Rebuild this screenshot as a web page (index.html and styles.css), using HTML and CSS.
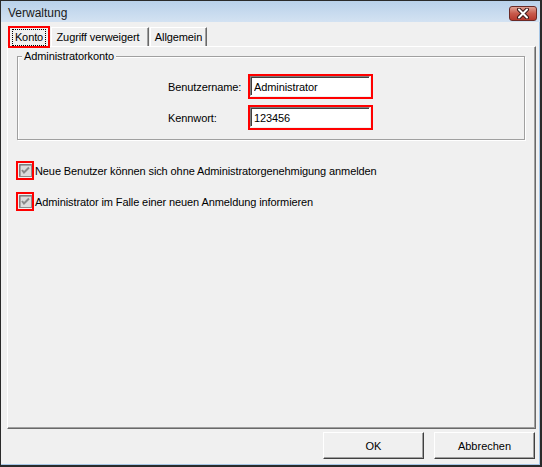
FILE: index.html
```html
<!DOCTYPE html>
<html lang="de">

<head>
    <meta charset="UTF-8">
    <title>Verwaltung</title>
    <link rel="stylesheet" href="styles.css">
</head>

<body>
    <div class="window">
        <div class="titlebar">
            <span class="title">Verwaltung</span>
            <button class="close" type="button" aria-label="Schließen">
                <svg width="14" height="11" viewBox="0 0 14 11">
                    <path d="M3 1.5 L11 9.5 M11 1.5 L3 9.5" stroke="#3b1a1a" stroke-width="4" stroke-linecap="round"/>
                    <path d="M3 1.5 L11 9.5 M11 1.5 L3 9.5" stroke="#ffffff" stroke-width="2" stroke-linecap="round"/>
                </svg>
            </button>
        </div>

        <div class="client">
            <div class="tabs">
                <div class="tab active"><span class="focus">Konto</span></div>
                <div class="tab tab-zugriff">Zugriff verweigert</div>
                <div class="tab tab-allg">Allgemein</div>
            </div>

            <div class="panel">
                <div class="group">
                    <span class="group-title">Administratorkonto</span>
                    <div class="form-grid">
                        <label for="user">Benutzername:</label>
                        <div class="mark"><input id="user" type="text" value="Administrator"></div>
                        <label for="pass">Kennwort:</label>
                        <div class="mark"><input id="pass" type="text" value="123456"></div>
                    </div>
                </div>

                <label class="check first">
                    <span class="mark check-mark">
                        <svg width="13" height="13" viewBox="0 0 13 13">
                            <rect x="0.5" y="0.5" width="12" height="12" fill="#dcdcdc" stroke="#8c8c8c"/>
                            <path d="M1 1 H12 M1 1 V12" stroke="#6e6e6e"/>
                            <path d="M3 6 L5 8.5 L10 3.5" fill="none" stroke="#8a8a8a" stroke-width="2"/>
                        </svg>
                    </span>
                    Neue Benutzer können sich ohne Administratorgenehmigung anmelden
                </label>

                <label class="check">
                    <span class="mark check-mark">
                        <svg width="13" height="13" viewBox="0 0 13 13">
                            <rect x="0.5" y="0.5" width="12" height="12" fill="#dcdcdc" stroke="#8c8c8c"/>
                            <path d="M1 1 H12 M1 1 V12" stroke="#6e6e6e"/>
                            <path d="M3 6 L5 8.5 L10 3.5" fill="none" stroke="#8a8a8a" stroke-width="2"/>
                        </svg>
                    </span>
                    Administrator im Falle einer neuen Anmeldung informieren
                </label>
            </div>

            <div class="footer">
                <button class="btn" type="button">OK</button>
                <button class="btn" type="button">Abbrechen</button>
            </div>
        </div>
    </div>
</body>

</html>
```

FILE: styles.css
```css
body {
    margin: 0;
    padding: 0;
    font-family: "Liberation Sans", Arial, sans-serif;
    font-size: 11px;
    letter-spacing: -0.1px;
    color: #000;
    background: #ffffff;
}

.window {
    width: 542px;
    height: 467px;
    box-sizing: border-box;
    border: 1px solid #2a2a2a;
    border-right-width: 2px;
    border-bottom-width: 2px;
    background: #a6c6e6;
    display: flex;
    flex-direction: column;
}

.titlebar {
    height: 21px;
    display: flex;
    align-items: center;
    padding-left: 7px;
    background: linear-gradient(#b9d1ea, #d3e2f2);
}

.title {
    font-size: 12px;
    letter-spacing: 0;
    color: #1a1a1a;
    margin-top: 2px;
}

.close {
    margin-left: auto;
    margin-right: 3px;
    margin-top: 4px;
    width: 28px;
    height: 15px;
    padding: 0;
    border: 1px solid #6a2a26;
    border-radius: 3px;
    background: linear-gradient(#e0a294, #c85a4c 50%, #b7392d);
    display: flex;
    align-items: center;
    justify-content: center;
}

.client {
    flex-grow: 1;
    margin-right: 1px;
    margin-bottom: 1px;
    background: #f0f0f0;
    display: flex;
    flex-direction: column;
}

/* tabs */
.tabs {
    display: flex;
    align-items: flex-end;
    height: 20px;
    padding-top: 6px;
    padding-left: 7px;
    margin-bottom: -2px;
    position: relative;
    z-index: 1;
}

.tab {
    height: 19px;
    box-sizing: border-box;
    display: flex;
    align-items: center;
    justify-content: center;
    border-left: 1px solid #ffffff;
    border-top: 1px solid #ffffff;
    border-right: 1px solid #696969;
    box-shadow: inset -1px 0 0 #a0a0a0;
    background: #f0f0f0;
    margin-bottom: 2px;
}

.tab.active {
    width: 42px;
    height: 22px;
    border: 2px solid #ff0000;
    box-shadow: none;
    margin-bottom: 0;
    margin-right: 1px;
}

.focus {
    border: 1px dotted #000;
    padding: 1px 2px 2px;
}

.tab-zugriff {
    width: 98px;
    padding-right: 4px;
}

.tab-allg {
    width: 57px;
    margin-left: 1px;
}

/* panel */
.panel {
    height: 383px;
    box-sizing: border-box;
    margin: 0 3px 0 6px;
    border-top: 1px solid #ffffff;
    border-left: 1px solid #ffffff;
    border-right: 1px solid #696969;
    border-bottom: 1px solid #696969;
    box-shadow: inset -1px -1px 0 #a0a0a0;
    padding: 9px 10px 0 9px;
}

.group {
    border: 1px solid #a0a0a0;
    box-shadow: 1px 1px 0 #ffffff, inset 1px 1px 0 #ffffff;
    padding: 0 0 9px 150px;
}

.group-title {
    display: block;
    width: max-content;
    margin: -7px 0 0 -146px;
    padding: 0 2px;
    background: #f0f0f0;
    line-height: 13px;
}

.form-grid {
    display: grid;
    grid-template-columns: 80px 125px;
    row-gap: 6px;
    align-items: center;
    margin-top: 11px;
}

.mark {
    border: 2px solid #ff0000;
    box-sizing: border-box;
}

.form-grid .mark {
    height: 25px;
    padding: 0 1px 1px 0;
}

.form-grid input {
    display: block;
    width: 100%;
    height: 100%;
    box-sizing: border-box;
    margin: 0;
    border: 1px solid;
    border-color: #808080 #ffffff #ffffff #808080;
    box-shadow: inset 1px 1px 0 #404040;
    background: #ffffff;
    font-family: "Liberation Sans", Arial, sans-serif;
    font-size: 11px;
    letter-spacing: -0.1px;
    padding: 1px 0 0 3px;
    color: #000;
    outline: none;
}

.check {
    display: flex;
    align-items: center;
    gap: 1px;
    margin-top: 12px;
    margin-left: -1px;
}

.check.first {
    margin-top: 21px;
}

.check-mark {
    width: 18px;
    height: 19px;
    display: flex;
    align-items: center;
    justify-content: center;
}

.check-mark svg {
    display: block;
}

/* footer */
.footer {
    flex-grow: 1;
    display: flex;
    justify-content: flex-end;
    align-items: flex-start;
    gap: 10px;
    padding: 3px 4px 0 0;
}

.btn {
    width: 101px;
    height: 27px;
    padding: 0;
    background: #f0f0f0;
    border: 1px solid;
    border-color: #ffffff #404040 #404040 #ffffff;
    box-shadow: inset -1px -1px 0 #a0a0a0;
    font-family: "Liberation Sans", Arial, sans-serif;
    font-size: 11px;
    color: #000;
}
```
